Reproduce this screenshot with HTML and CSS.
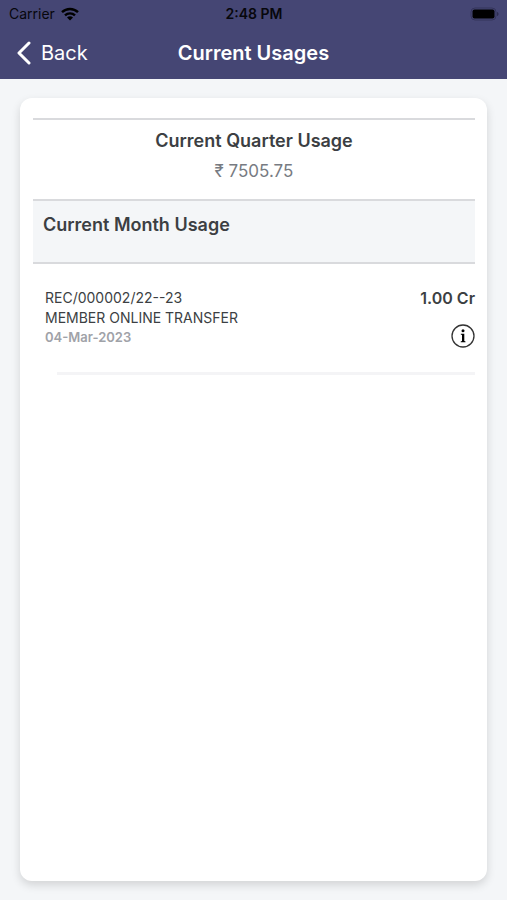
FILE: index.html
```html
<!DOCTYPE html>
<html lang="en">
<head>
<meta charset="utf-8">
<meta name="viewport" content="width=device-width, initial-scale=1">
<title>Current Usages</title>
<link rel="stylesheet" href="styles.css">
</head>
<body>
<header class="header">
  <div class="status">
    <div class="carrier">
      <span>Carrier</span>
      <svg width="18" height="14" viewBox="0 0 18 14" aria-hidden="true">
        <g fill="none" stroke="#000" stroke-width="2.4">
          <path d="M1 5.2C5.5.9 12.500.9 17 5.200"/>
          <path d="M4 8.400c2.800-2.700 7.200-2.700 10 0"/>
        </g>
        <path d="M6 10.500c1.700-1.600 4.300-1.600 6 0l-3 3z"/>
      </svg>
    </div>
    <time class="clock">2:48 PM</time>
    <svg class="battery" width="29" height="14" viewBox="0 0 29 14" aria-hidden="true">
      <rect x="1" y="1" width="25" height="12" rx="4" fill="none" stroke="#34345b"/>
      <rect x="2.500" y="2.500" width="22" height="9" rx="2"/>
      <path d="M27 5c2 .5 2 3.500 0 4z" fill="#2d2d50"/>
    </svg>
  </div>
  <nav class="navbar">
    <a class="back" href="#">
      <svg width="16" height="24" viewBox="0 0 16 24" fill="none" stroke="#fff" stroke-width="3" stroke-linecap="round" stroke-linejoin="round" aria-hidden="true"><path d="M13 2 3 12l10 10"/></svg>
      <span>Back</span>
    </a>
    <h1 class="title">Current Usages</h1>
  </nav>
</header>
<main class="card">
  <section class="quarter">
    <h2 class="heading">Current Quarter Usage</h2>
    <p class="total">₹ 7505.75</p>
  </section>
  <section>
    <div class="month"><h2 class="heading">Current Month Usage</h2></div>
    <ul class="entries">
      <li class="entry">
        <div class="details">
          <p>REC/000002/22--23</p>
          <p>MEMBER ONLINE TRANSFER</p>
          <time class="date" datetime="2023-03-04">04-Mar-2023</time>
        </div>
        <div class="side">
          <strong class="amount">1.00 Cr</strong>
          <button class="info" type="button" aria-label="Transaction details">
            <svg width="24" height="24" viewBox="0 0 24 24" aria-hidden="true">
              <circle cx="12" cy="12" r="11" fill="none" stroke="#333" stroke-width="1.300"/>
              <circle cx="12" cy="6.700" r="1.500"/>
              <path d="M9.800 9.800h3.500v7.300l1.200.3v.8H9.700v-.8l1.300-.3v-6.200l-1.200-.3z"/>
            </svg>
          </button>
        </div>
      </li>
    </ul>
  </section>
</main>
</body>
</html>
```

FILE: styles.css
```css
* {
  box-sizing: border-box;
}

body {
  margin: 0;
  min-height: 100vh;
  display: flex;
  flex-direction: column;
  background: #f4f6f8;
  color: #3c3f43;
  font-family: Inter, "Liberation Sans", sans-serif;
}

h1, h2, p, ul {
  margin: 0;
  padding: 0;
}

.header {
  background: #454674;
  padding-bottom: 5px;
}

.status,
.navbar {
  display: grid;
  grid-template-columns: 1fr auto 1fr;
  align-items: center;
}

.status {
  height: 27px;
  padding: 0 8px 0 9px;
  color: #07070c;
  font-size: 14px;
}

.carrier {
  display: flex;
  align-items: center;
  gap: 6px;
}

.clock {
  font-weight: 600;
}

.battery {
  justify-self: end;
}

.navbar {
  height: 47px;
  padding: 4px 16px 0;
  color: #fff;
}

.back {
  display: flex;
  align-items: center;
  gap: 9px;
  color: inherit;
  font-size: 20px;
  text-decoration: none;
}

.title {
  font-size: 20px;
  font-weight: 600;
}

.card {
  flex: 1;
  margin: 19px 20px;
  padding: 20px 12px 20px 13px;
  border-radius: 12px;
  background: #fff;
  box-shadow: 0 4px 10px rgba(0, 0, 0, 0.14);
}

.quarter {
  padding: 7px 0 14px;
  border-top: 2px solid #d9dadd;
  text-align: center;
}

.heading {
  font-size: 18px;
  line-height: 28px;
  font-weight: 600;
}

.total {
  padding-top: 2px;
  color: #777b82;
  font-size: 17px;
  line-height: 28px;
}

.month {
  height: 65px;
  padding: 10px;
  border: solid #d9dadd;
  border-width: 2px 0;
  background: #f4f6f8;
}

.entries {
  list-style: none;
}

.entry {
  display: flex;
  flex-wrap: wrap;
  justify-content: space-between;
  padding: 24px 0 24px 12px;
}

.entry::after {
  content: "";
  width: 100%;
  margin: 24px 0 0 12px;
  border-bottom: 3px solid #f4f4f6;
}

.details {
  font-size: 14px;
  line-height: 20px;
}

.date {
  display: block;
  color: #a0a2a8;
  font-size: 13px;
  line-height: 18px;
  font-weight: 600;
}

.side {
  display: flex;
  flex-direction: column;
  align-items: flex-end;
  gap: 16px;
}

.amount {
  font-size: 16px;
  line-height: 20px;
  font-weight: 600;
}

.info {
  display: flex;
  padding: 0;
  border: 0;
  background: none;
  cursor: pointer;
}
```
